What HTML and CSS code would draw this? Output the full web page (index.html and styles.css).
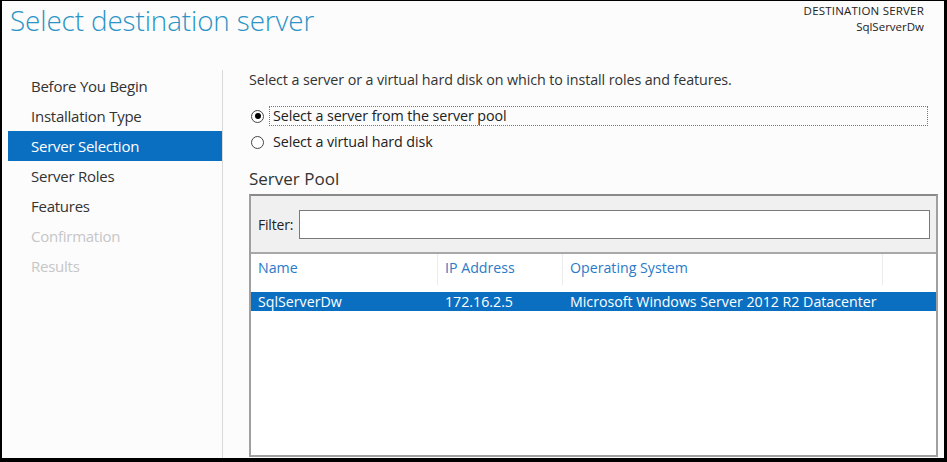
FILE: index.html
```html
<!DOCTYPE html>
<html>
<head>
<meta charset="utf-8">
<link rel="stylesheet" href="styles.css">
</head>
<body>
<div class="frame">
  <header class="top">
    <h1 class="title">Select destination server</h1>
    <div class="dest">
      <div class="dest-label">DESTINATION SERVER</div>
      <div class="dest-name">SqlServerDw</div>
    </div>
  </header>
  <div class="main">
    <nav class="nav">
      <div class="nav-item">Before You Begin</div>
      <div class="nav-item">Installation Type</div>
      <div class="nav-item active">Server Selection</div>
      <div class="nav-item">Server Roles</div>
      <div class="nav-item">Features</div>
      <div class="nav-item disabled">Confirmation</div>
      <div class="nav-item disabled">Results</div>
    </nav>
    <section class="content">
      <p class="intro">Select a server or a virtual hard disk on which to install roles and features.</p>
      <div class="radios">
        <div class="radio-row">
          <span class="radio checked"></span>
          <span class="radio-label focused">Select a server from the server pool</span>
        </div>
        <div class="radio-row">
          <span class="radio"></span>
          <span class="radio-label">Select a virtual hard disk</span>
        </div>
      </div>
      <h2 class="pool-title">Server Pool</h2>
      <div class="pool">
        <div class="filter-bar">
          <span class="filter-label">Filter:</span>
          <div class="filter-input"></div>
        </div>
        <div class="grid">
          <div class="grid-head">
            <div class="col c1">Name</div>
            <div class="col c2">IP Address</div>
            <div class="col c3">Operating System</div>
            <div class="col c4"></div>
          </div>
          <div class="grid-row selected">
            <div class="col c1">SqlServerDw</div>
            <div class="col c2">172.16.2.5</div>
            <div class="col c3">Microsoft Windows Server 2012 R2 Datacenter</div>
            <div class="col c4"></div>
          </div>
        </div>
      </div>
    </section>
  </div>
</div>
</body>
</html>
```
FILE: styles.css
```css
html, body {
  margin: 0;
  padding: 0;
  background: #000;
}
body {
  width: 947px;
  height: 462px;
  overflow: hidden;
  font-family: "Open Sans", "Noto Sans", sans-serif;
}
.frame {
  box-sizing: border-box;
  margin: 1px 3px 0 2px;
  width: 942px;
  height: 457px;
  background: #fcfcfc;
  display: flex;
  flex-direction: column;
  overflow: hidden;
}
.top {
  display: flex;
  justify-content: space-between;
  align-items: flex-start;
  height: 69px;
  flex: none;
}
.title {
  margin: 0;
  padding: 1px 0 0 8px;
  font-size: 27.8px;
  font-weight: 300;
  color: #2a94c6;
  line-height: 36px;
  letter-spacing: -0.1px;
}
.dest {
  text-align: right;
  padding: 2px 20px 0 0;
  line-height: 16px;
  color: #222;
}
.dest-label {
  font-size: 11.5px;
  letter-spacing: 0.2px;
}
.dest-name {
  font-size: 11.5px;
}
.main {
  flex: 1;
  display: flex;
}
.nav {
  width: 221px;
  flex: none;
  border-right: 1px solid #d9d9d9;
  padding-top: 1px;
  box-sizing: border-box;
  padding-left: 6px;
}
.nav-item {
  height: 30px;
  line-height: 30px;
  padding-left: 23px;
  font-size: 15px;
  color: #333;
  letter-spacing: -0.25px;
}
.nav-item.active {
  background: #0b6fc1;
  color: #fff;
}
.nav-item.disabled {
  color: #c6c6c6;
}
.content {
  flex: 1;
  padding-left: 26px;
  padding-right: 6px;
  display: flex;
  flex-direction: column;
}
.intro {
  margin: 0;
  font-size: 14.3px;
  line-height: 20px;
  color: #333;
  letter-spacing: -0.1px;
}
.radios {
  margin-top: 16px;
  display: flex;
  flex-direction: column;
  gap: 6px;
}
.radio-row {
  display: flex;
  align-items: center;
  height: 20px;
}
.radio {
  box-sizing: border-box;
  width: 13px;
  height: 13px;
  border-radius: 50%;
  border: 1px solid #444;
  background: #fff;
  margin-left: 2px;
  margin-right: 5px;
  flex: none;
  position: relative;
}
.radio.checked::after {
  content: "";
  position: absolute;
  left: 2.5px;
  top: 2.5px;
  width: 6px;
  height: 6px;
  border-radius: 50%;
  background: #000;
}
.radio-label {
  font-size: 14.3px;
  color: #222;
  padding: 0 3px;
  line-height: 18px;
  border: 1px dotted transparent;
  letter-spacing: -0.1px;
}
.radio-label.focused {
  border-color: #777;
  flex: 1;
  margin-right: 10px;
}
.pool-title {
  margin: 16px 0 0 0;
  font-size: 17px;
  font-weight: 400;
  color: #333;
  line-height: 22px;
}
.pool {
  margin-top: 4px;
  border: 2px solid #a0a0a0;
  border-top-color: #8a8a8a;
  flex: 1;
  display: flex;
  flex-direction: column;
  background: #fff;
  margin-bottom: 1px;
}
.filter-bar {
  height: 58px;
  background: #f0f0f0;
  border-bottom: 2px solid #a8a8a8;
  display: flex;
  align-items: center;
  padding: 1px 6px 0 7px;
  box-sizing: border-box;
  flex: none;
}
.filter-label {
  font-size: 14px;
  color: #222;
  margin-right: 6px;
  letter-spacing: -0.2px;
}
.filter-input {
  flex: 1;
  height: 27px;
  border: 1px solid #7a7a7a;
  background: #fff;
}
.grid {
  flex: 1;
  background: #fff;
}
.grid-head, .grid-row {
  display: flex;
}
.grid-head {
  height: 31px;
  margin-bottom: 7px;
}
.grid-head .col {
  color: #2a7ac8;
  border-right: 1px solid #ececec;
  line-height: 28px;
  font-size: 14.2px;
}
.col {
  box-sizing: border-box;
  padding-left: 7px;
  white-space: nowrap;
  flex: none;
}
.c1 { width: 187px; }
.c2 { width: 125px; }
.c3 { width: 320px; }
.c4 { flex: 1; border-right: none !important; }
.grid-row {
  height: 19px;
  line-height: 19px;
  font-size: 14.2px;
}
.grid-row.selected {
  background: #0b6fc1;
  color: #fff;
}
```
